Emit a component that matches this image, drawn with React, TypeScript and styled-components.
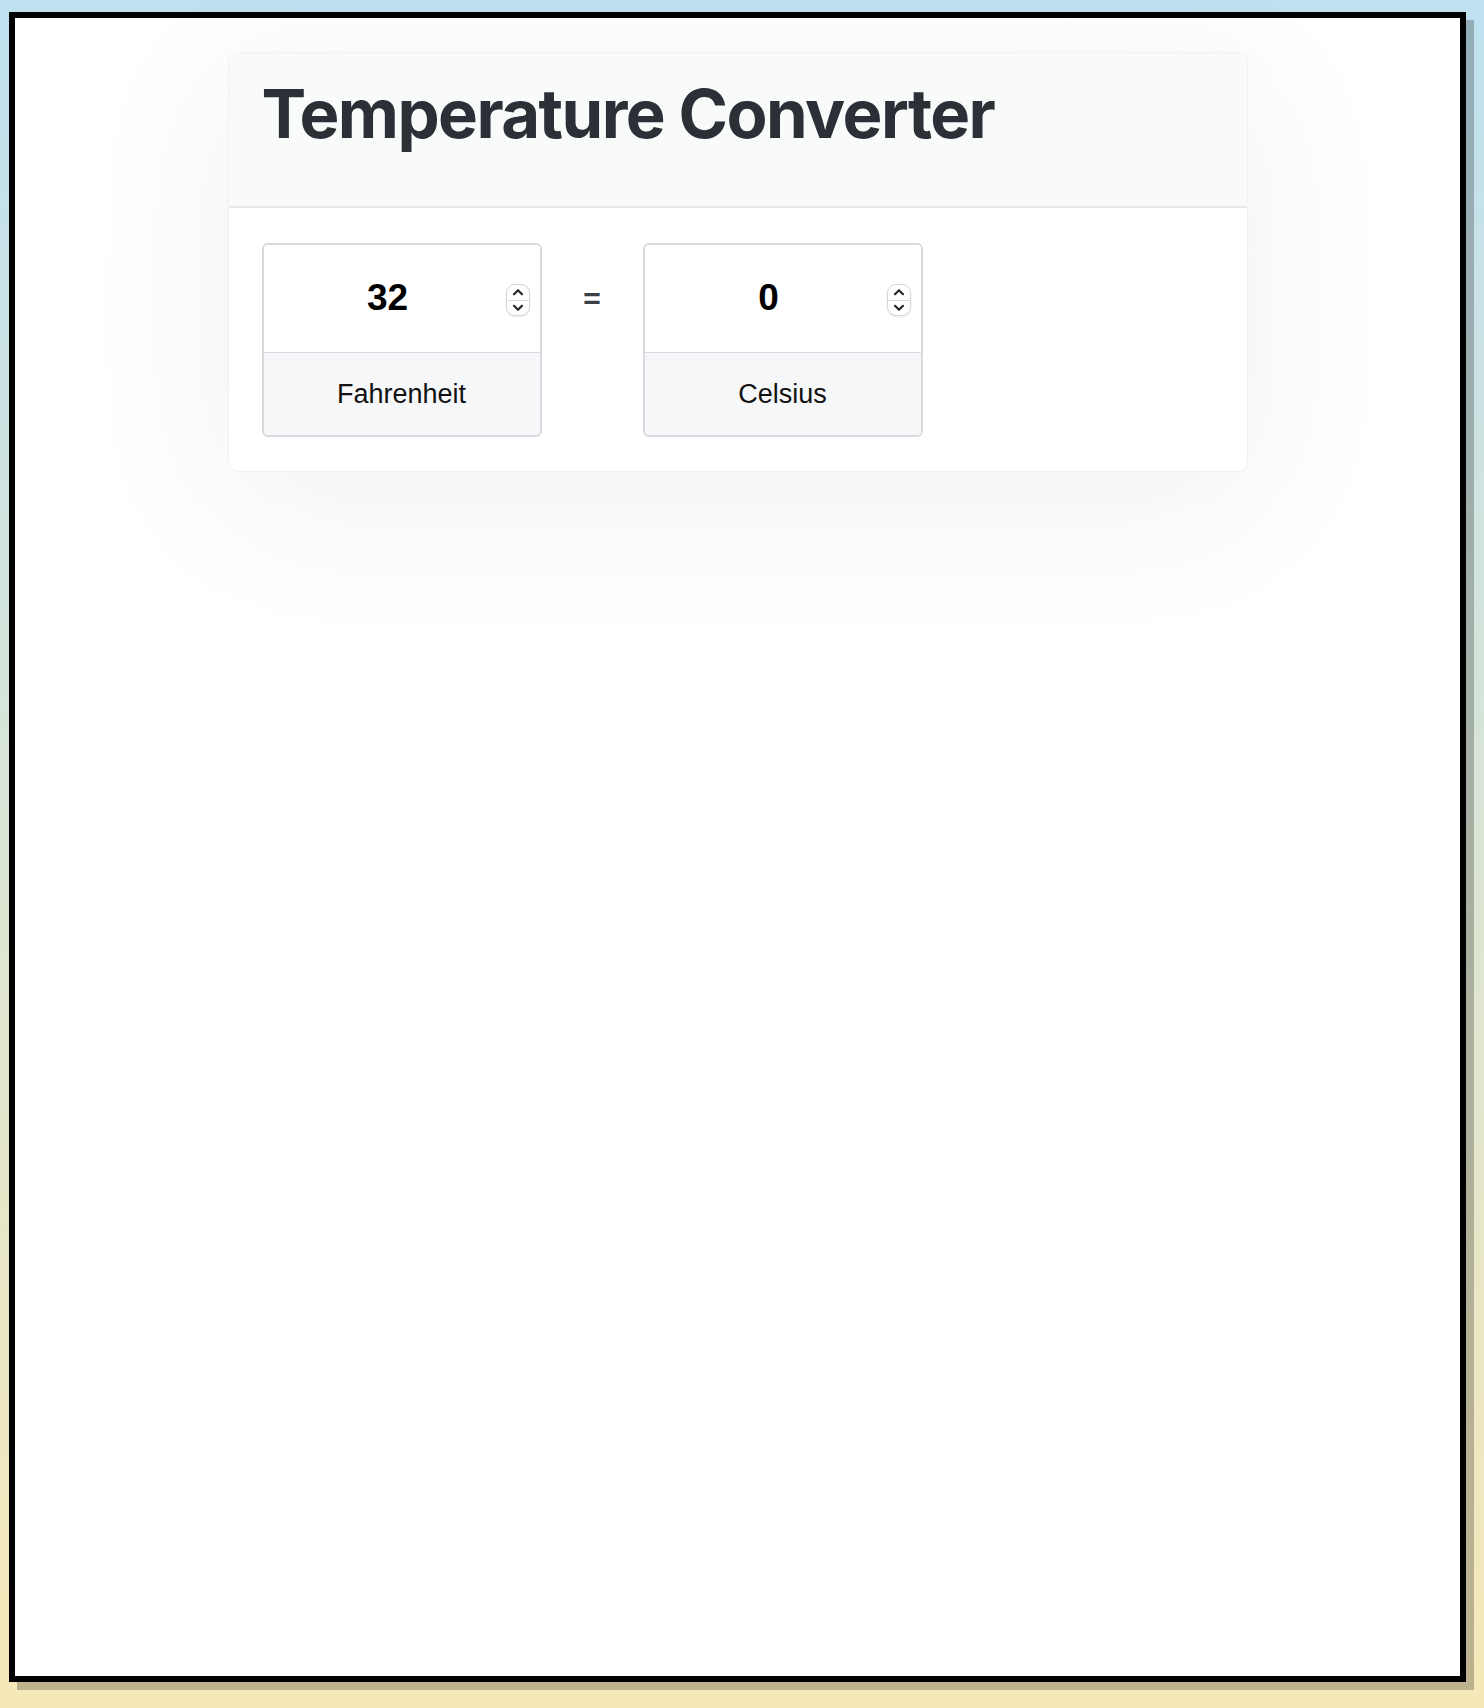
import React, { useState } from "react";
import styled, { createGlobalStyle } from "styled-components";

const GlobalStyle = createGlobalStyle`
  html, body {
    margin: 0;
    padding: 0;
    min-height: 100%;
  }
  body {
    min-height: 1708px;
    background: linear-gradient(180deg, #bfe1f0 0%, #f6e8b8 100%);
    font-family: "Liberation Sans", Arial, sans-serif;
    overflow: hidden;
  }
  * { box-sizing: border-box; }
`;

const Frame = styled.div`
  margin: 12px 0 0 9px;
  width: 1457px;
  height: 1670px;
  background: #ffffff;
  border: 6px solid #000000;
  box-shadow: 8px 8px 0 rgba(0, 0, 0, 0.23);
`;

const Card = styled.section`
  width: 1020px;
  margin: 34px auto 0;
  background: #ffffff;
  border: 1px solid #f1f2f5;
  border-radius: 10px;
  overflow: hidden;
  box-shadow: 0 30px 160px rgba(40, 50, 100, 0.07);
`;

const Header = styled.header`
  background: #f9fafa;
  padding: 21px 33px 52px;
  border-bottom: 2px solid #e6e8ec;
`;

const Title = styled.h1`
  margin: 0;
  font-family: Inter, "Noto Sans", sans-serif;
  font-weight: 700;
  font-size: 67px;
  line-height: 80px;
  letter-spacing: -1.55px;
  color: #2b2f36;
`;

const Body = styled.div`
  padding: 35px 33px 34px;
  display: flex;
  align-items: flex-start;
`;

const UnitBox = styled.div`
  width: 280px;
  border: 2px solid #d9dadf;
  border-radius: 6px;
  overflow: hidden;
  display: flex;
  flex-direction: column;
`;

const InputRow = styled.div`
  height: 107px;
  display: flex;
  align-items: center;
  padding: 0 10px 0 6px;
  background: #ffffff;
`;

const NumberInput = styled.input`
  flex: 1;
  min-width: 0;
  border: none;
  outline: none;
  background: transparent;
  text-align: center;
  font-family: "Liberation Sans", Arial, sans-serif;
  font-weight: 700;
  font-size: 37px;
  color: #000000;
  padding: 0 0 2px;
  -moz-appearance: textfield;
  &::-webkit-outer-spin-button,
  &::-webkit-inner-spin-button {
    -webkit-appearance: none;
    margin: 0;
  }
`;

const Spinner = styled.div`
  width: 24px;
  height: 32px;
  margin-top: 3px;
  border: 1px solid #d4d5da;
  border-radius: 9px;
  background: #ffffff;
  box-shadow: 0 1px 2px rgba(0, 0, 0, 0.08);
  display: flex;
  flex-direction: column;
  overflow: hidden;
`;

const SpinButton = styled.button<{ $down?: boolean }>`
  flex: 1;
  border: none;
  padding: 0;
  margin: 0;
  background: transparent;
  display: flex;
  align-items: center;
  justify-content: center;
  cursor: pointer;
  border-top: ${(p) => (p.$down ? "1px solid #d9dadf" : "none")};
`;

const Label = styled.div`
  height: 83px;
  border-top: 1px solid #d9dadf;
  background: #f6f7f9;
  display: flex;
  align-items: center;
  justify-content: center;
  font-family: "Liberation Sans", Arial, sans-serif;
  font-size: 27px;
  color: #111111;
`;

const Equals = styled.div`
  width: 101px;
  height: 111px;
  display: flex;
  align-items: center;
  justify-content: center;
  font-family: Inter, "Noto Sans", sans-serif;
  font-size: 33px;
  font-weight: 500;
  color: #3b3f46;
  padding-bottom: 5px;
`;

const Chevron = ({ up }: { up?: boolean }) => (
  <svg width="12" height="8" viewBox="0 0 12 8" aria-hidden="true">
    <path
      d={up ? "M2 6.2 L6 2.2 L10 6.2" : "M2 1.8 L6 5.8 L10 1.8"}
      fill="none"
      stroke="#2a2a2a"
      strokeWidth="2.2"
      strokeLinecap="round"
      strokeLinejoin="round"
    />
  </svg>
);

type UnitProps = {
  value: number;
  label: string;
  onChange: (v: number) => void;
};

const UnitField = ({ value, label, onChange }: UnitProps) => (
  <UnitBox>
    <InputRow>
      <NumberInput
        type="number"
        value={value}
        onChange={(e) => onChange(Number(e.target.value))}
      />
      <Spinner>
        <SpinButton type="button" onClick={() => onChange(value + 1)}>
          <Chevron up />
        </SpinButton>
        <SpinButton type="button" $down onClick={() => onChange(value - 1)}>
          <Chevron />
        </SpinButton>
      </Spinner>
    </InputRow>
    <Label>{label}</Label>
  </UnitBox>
);

const round = (n: number) => Math.round(n * 100) / 100;

export default function App() {
  const [f, setF] = useState(32);
  const c = round(((f - 32) * 5) / 9);

  return (
    <>
      <GlobalStyle />
      <Frame>
        <Card>
          <Header>
            <Title>Temperature Converter</Title>
          </Header>
          <Body>
            <UnitField value={f} label="Fahrenheit" onChange={setF} />
            <Equals>=</Equals>
            <UnitField
              value={c}
              label="Celsius"
              onChange={(v) => setF(round((v * 9) / 5 + 32))}
            />
          </Body>
        </Card>
      </Frame>
    </>
  );
}
